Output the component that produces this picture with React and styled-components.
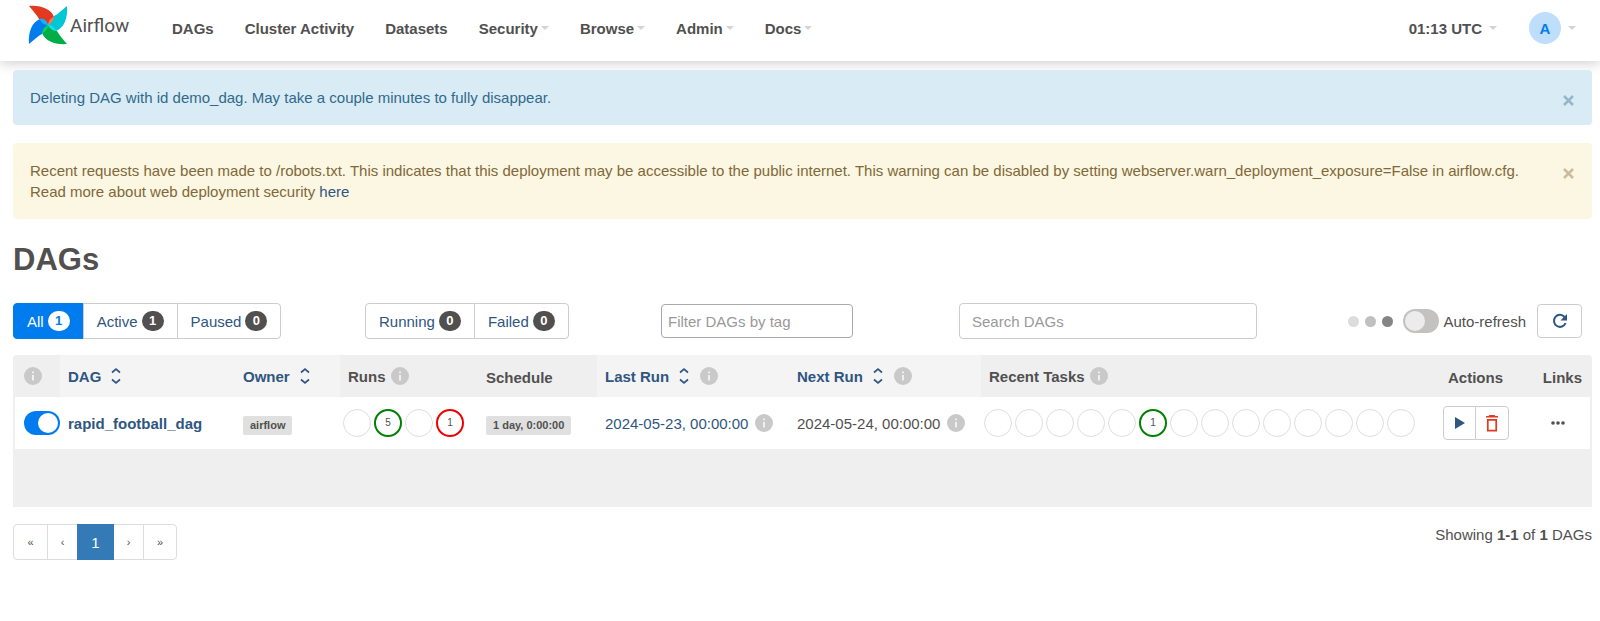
import React from 'react';
import styled, { createGlobalStyle, css } from 'styled-components';

const color = {
  text: '#51504f',
  link: '#2f5680',
  blue: '#017cee',
  border: '#cccccc',
  band: '#efefef',
  bandLight: '#f4f4f4',
};

const GlobalStyle = createGlobalStyle`
  *, *::before, *::after { box-sizing: border-box; }
  body {
    margin: 0;
    background: #fff;
    color: ${color.text};
    font-family: "Liberation Sans", Arial, sans-serif;
    font-size: 15px;
    line-height: 21px;
  }
  button, input { font: inherit; color: inherit; }
  button { cursor: pointer; }
  a { color: ${color.link}; text-decoration: none; }
`;

const NavBar = styled.header`
  display: flex;
  align-items: center;
  height: 61px;
  padding: 0 24px 5px 28px;
  background: #fff;
  box-shadow: 0 2px 12px rgba(0, 0, 0, 0.2);
`;

const Brand = styled.a`
  display: flex;
  align-items: center;
  gap: 2px;
  width: 144px;
  padding-bottom: 6px;
  color: ${color.text};
  font-family: Roboto, sans-serif;
  font-size: 19px;
`;

const NavMenu = styled.nav`
  display: flex;
  flex: 1;
  gap: 31px;
`;

const NavItem = styled.a`
  display: flex;
  align-items: center;
  gap: ${(p) => p.$gap || 3}px;
  color: ${color.text};
  font-weight: bold;
  white-space: nowrap;
`;

const NavEnd = styled.div`
  display: flex;
  align-items: center;
  gap: 32px;
`;

const Caret = styled.span`
  border: 4px solid transparent;
  border-top-color: #d5d3d3;
  border-bottom: 0;
`;

const Avatar = styled.span`
  display: grid;
  place-items: center;
  width: 32px;
  height: 32px;
  border-radius: 50%;
  background: #bfdefb;
  color: ${color.blue};
`;

const Page = styled.main`
  padding: 9px 8px 40px 13px;
`;

const Alert = styled.div`
  display: flex;
  align-items: flex-start;
  justify-content: space-between;
  margin-bottom: 18px;
  padding: 17px;
  border-radius: 4px;
  background: ${(p) => (p.$warning ? '#fcf7e2' : '#d9ecf5')};
  color: ${(p) => (p.$warning ? '#80683a' : '#31698c')};
`;

const AlertClose = styled.button`
  display: flex;
  margin: 8px 1px 0 0;
  padding: 0;
  border: 0;
  background: none;
  opacity: 0.4;
`;

const Title = styled.h1`
  margin: 22px 0 25px;
  font-size: 31px;
  line-height: 37px;
`;

const Toolbar = styled.div`
  display: grid;
  grid-template-columns: 352fr 296fr 298fr 298fr 335fr;
  align-items: center;
  height: 36px;
  margin-bottom: 16px;
`;

const ButtonGroup = styled.div`
  display: flex;
`;

const groupItem = css`
  display: flex;
  align-items: center;
  justify-content: center;
  border: 1px solid ${color.border};
  background: #fff;
  color: ${color.link};
  & + & { margin-left: -1px; }
  &:first-child { border-radius: 4px 0 0 4px; }
  &:last-child { border-radius: 0 4px 4px 0; }
`;

const FilterButton = styled.button`
  ${groupItem}
  gap: 4px;
  height: 36px;
  padding: 0 13px;
  ${(p) => p.$active && css`
    border-color: ${color.blue};
    background: ${color.blue};
    color: #fff;
  `}
`;

const Badge = styled.span`
  min-width: 22px;
  border-radius: 10px;
  background: ${(p) => (p.$active ? '#fff' : color.text)};
  color: ${(p) => (p.$active ? color.blue : '#fff')};
  font-size: 13px;
  font-weight: bold;
  line-height: 20px;
  text-align: center;
`;

const TextField = styled.input`
  width: ${(p) => (p.$compact ? '192px' : '100%')};
  height: ${(p) => (p.$compact ? 34 : 36)}px;
  padding: 0 ${(p) => (p.$compact ? 6 : 12)}px;
  border: 1px solid ${(p) => (p.$compact ? '#aaa' : color.border)};
  border-radius: 4px;
  background: #fff;
  &::placeholder { color: #999; opacity: 1; }
`;

const RefreshArea = styled.div`
  display: flex;
  align-items: center;
  justify-content: flex-end;
  padding-right: 10px;
`;

const Dots = styled.div`
  display: flex;
  gap: 6px;
  margin-right: 10px;
`;

const Dot = styled.span`
  width: 11px;
  height: 11px;
  border-radius: 50%;
  background: ${(p) => p.$tone};
`;

const SwitchLabel = styled.label`
  display: flex;
  align-items: center;
  gap: 4px;
  white-space: nowrap;
`;

const Switch = styled.input`
  appearance: none;
  display: flex;
  align-items: center;
  width: 36px;
  height: 24px;
  margin: 0;
  padding: 0 2px;
  border-radius: 12px;
  background: #c4c2c1;
  &::before {
    content: '';
    width: 20px;
    height: 20px;
    border-radius: 50%;
    background: #edecec;
  }
  &:checked { justify-content: flex-end; background: ${color.blue}; }
  &:checked::before { background: #fff; }
`;

const IconButton = styled.button`
  ${groupItem}
  width: ${(p) => p.$width}px;
  height: 34px;
  padding: 0;
  ${(p) => p.$danger && css`color: #e43921;`}
  &&.single { border-radius: 4px; margin-left: 11px; }
`;

const TableFrame = styled.div`
  padding: 0 2px 58px;
  border-radius: 4px 4px 0 0;
  background: ${color.band};
`;

const Table = styled.table`
  width: 100%;
  table-layout: fixed;
  border-collapse: collapse;
`;

const HeadCell = styled.th`
  height: 42px;
  padding: ${(p) => (p.$plain ? '3px' : '0')} 8px 0 ${(p) => (p.$first ? 9 : 8)}px;
  background: ${(p) => (p.$light ? color.bandLight : 'transparent')};
  color: ${(p) => (p.$light ? color.link : color.text)};
  text-align: ${(p) => p.$align || 'left'};
  white-space: nowrap;
`;

const HeadContent = styled.span`
  display: flex;
  align-items: center;
  gap: ${(p) => p.$gap || 5}px;
`;

const SortLink = styled.a`
  display: flex;
  align-items: center;
  gap: 10px;
`;

const Cell = styled.td`
  height: 52px;
  padding: 0 8px 0 ${(p) => (p.$tight ? 3 : p.$first ? 9 : 8)}px;
  background: #fff;
  white-space: nowrap;
`;

const DagLink = styled.a`
  font-weight: bold;
`;

const Tag = styled.a`
  display: inline-block;
  margin-top: 4px;
  padding: 0 7px;
  border-radius: 2px;
  background: #e0e0e0;
  color: ${color.text};
  font-size: 11px;
  font-weight: bold;
  line-height: 19px;
  vertical-align: middle;
`;

const MoreLink = styled.a`
  display: flex;
  justify-content: center;
`;

const CircleRow = styled.div`
  display: flex;
  gap: 3px;
`;

const Circle = styled.span`
  display: grid;
  place-items: center;
  width: 28px;
  height: 28px;
  border: ${(p) => (p.$tone ? `2px solid ${p.$tone}` : '1px solid #dedede')};
  border-radius: 50%;
  font-size: 10px;
  line-height: 12px;
`;

const RunDate = styled.span`
  display: flex;
  align-items: center;
  gap: 7px;
`;

const Footer = styled.footer`
  display: flex;
  justify-content: space-between;
  align-items: flex-start;
  margin-top: 17px;
`;

const Pager = styled.nav`
  display: flex;
`;

const PageLink = styled.a`
  ${groupItem}
  width: ${(p) => p.$width}px;
  height: 36px;
  border-color: #ddd;
  color: ${color.text};
  font-size: ${(p) => (p.$current ? 15 : 11)}px;
  ${(p) => p.$current && css`
    border-color: #337ab7;
    background: #337ab7;
    color: #fff;
    z-index: 1;
  `}
`;

const petals = [
  [0, '#e43921', '#ff7557'],
  [90, '#00c7d4', '#11e1ee'],
  [180, '#00ad46', '#04d659'],
  [270, '#017cee', '#0cb6ff'],
];

const Pinwheel = () => (
  <svg width="40" height="40" viewBox="0 0 40 40" aria-hidden="true">
    {petals.map(([angle, fill, fold]) => (
      <g key={angle} transform={`rotate(${angle} 20 20)`}>
        <path fill={fill} d="M1 1C13 0 23 4 26 12L20 20C18 16 15 14 11 14C9 10 5 6 1 1Z" />
        <path fill={fold} d="M20 20C20 17 22 13 26 12C27 16 24 19 20 20Z" />
      </g>
    ))}
  </svg>
);

const Cross = () => (
  <svg width="11" height="11" viewBox="0 0 11 11" aria-hidden="true">
    <path d="M1 1L10 10M10 1L1 10" stroke="currentColor" strokeWidth="2.500" />
  </svg>
);

const SortIcon = () => (
  <svg width="10" height="16" viewBox="0 0 10 16" fill="none" stroke="currentColor" strokeWidth="1.700" aria-hidden="true">
    <path d="M1 4.500L5 1.200L9 4.500M1 11.500L5 14.800L9 11.500" />
  </svg>
);

const InfoIcon = () => (
  <svg width="18" height="18" viewBox="0 0 18 18" aria-hidden="true">
    <circle cx="9" cy="9" r="9" fill="#c9c9c9" />
    <path d="M8.100 4.500h1.800v1.800H8.100zM8.100 8h1.800v5.500H8.100z" fill="#f4f4f4" />
  </svg>
);

const RefreshIcon = () => (
  <svg width="16" height="16" viewBox="0 0 16 16" aria-hidden="true">
    <path fill="none" stroke="currentColor" strokeWidth="2" d="M12.600 4A6 6 0 1 0 13.600 10" />
    <path fill="currentColor" d="M15 1v6.500H8.500z" />
  </svg>
);

const PlayIcon = () => (
  <svg width="10" height="12" viewBox="0 0 10 12" aria-hidden="true">
    <path d="M0 0L10 6L0 12Z" fill="currentColor" />
  </svg>
);

const TrashIcon = () => (
  <svg width="14" height="17" viewBox="0 0 14 17" aria-hidden="true">
    <path fill="none" stroke="currentColor" strokeWidth="1.700" d="M2.800 4.800h8.400v10.800H2.800z" />
    <path fill="currentColor" d="M4.500 0h5l.8 1H13v1.600H1V1h2.700z" />
  </svg>
);

const MoreIcon = () => (
  <svg width="14" height="4" viewBox="0 0 14 4" fill={color.text} aria-hidden="true">
    <circle cx="2" cy="2" r="1.800" /><circle cx="7" cy="2" r="1.800" /><circle cx="12" cy="2" r="1.800" />
  </svg>
);

const navLinks = [
  ['DAGs'], ['Cluster Activity'], ['Datasets'],
  ['Security', true], ['Browse', true], ['Admin', true], ['Docs', true],
];
const columnWidths = [45, 175, 105, 138, 119, 192, 192, 459, 90, 60];
const runCounts = [{}, { n: 5, tone: 'green' }, {}, { n: 1, tone: '#f00000' }];
const taskCounts = Array.from({ length: 14 }, (_, i) => (i === 5 ? { n: 1, tone: 'green' } : {}));

const Filter = ({ label, count, active }) => (
  <FilterButton type="button" $active={active}>
    {label}<Badge $active={active}>{count}</Badge>
  </FilterButton>
);

const SortHead = ({ label, info }) => (
  <HeadCell $light>
    <HeadContent $gap={11}>
      <SortLink href="#sort">{label}<SortIcon /></SortLink>
      {info && <InfoIcon />}
    </HeadContent>
  </HeadCell>
);

const Counts = ({ items }) => (
  <CircleRow>
    {items.map((c, i) => <Circle key={i} $tone={c.tone}>{c.n}</Circle>)}
  </CircleRow>
);

export default function App() {
  return (
    <>
      <GlobalStyle />
      <NavBar>
        <Brand href="#home"><Pinwheel />Airflow</Brand>
        <NavMenu>
          {navLinks.map(([label, menu]) => (
            <NavItem key={label} href="#nav">{label}{menu && <Caret />}</NavItem>
          ))}
        </NavMenu>
        <NavEnd>
          <NavItem href="#time" $gap={7}>01:13 UTC<Caret /></NavItem>
          <NavItem href="#user" $gap={7}><Avatar>A</Avatar><Caret /></NavItem>
        </NavEnd>
      </NavBar>
      <Page>
        <Alert role="status">
          <span>Deleting DAG with id demo_dag. May take a couple minutes to fully disappear.</span>
          <AlertClose type="button" aria-label="Close"><Cross /></AlertClose>
        </Alert>
        <Alert role="alert" $warning>
          <span>
            Recent requests have been made to /robots.txt. This indicates that this deployment may be accessible to the public internet. This warning can be disabled by setting webserver.warn_deployment_exposure=False in airflow.cfg.
            <br />
            Read more about web deployment security <a href="#security">here</a>
          </span>
          <AlertClose type="button" aria-label="Close"><Cross /></AlertClose>
        </Alert>
        <Title>DAGs</Title>
        <Toolbar>
          <ButtonGroup>
            <Filter label="All" count={1} active />
            <Filter label="Active" count={1} />
            <Filter label="Paused" count={0} />
          </ButtonGroup>
          <ButtonGroup>
            <Filter label="Running" count={0} />
            <Filter label="Failed" count={0} />
          </ButtonGroup>
          <TextField $compact aria-label="Filter DAGs by tag" placeholder="Filter DAGs by tag" />
          <TextField aria-label="Search DAGs" placeholder="Search DAGs" />
          <RefreshArea>
            <Dots><Dot $tone="#dcdcdc" /><Dot $tone="#c0c0c0" /><Dot $tone="#858585" /></Dots>
            <SwitchLabel><Switch type="checkbox" />Auto-refresh</SwitchLabel>
            <IconButton type="button" className="single" $width={45} aria-label="Refresh"><RefreshIcon /></IconButton>
          </RefreshArea>
        </Toolbar>
        <TableFrame>
          <Table>
            <colgroup>
              {columnWidths.map((w, i) => <col key={i} width={w} />)}
            </colgroup>
            <thead>
              <tr>
                <HeadCell $first><HeadContent><InfoIcon /></HeadContent></HeadCell>
                <SortHead label="DAG" />
                <SortHead label="Owner" />
                <HeadCell><HeadContent>Runs<InfoIcon /></HeadContent></HeadCell>
                <HeadCell $plain>Schedule</HeadCell>
                <SortHead label="Last Run" info />
                <SortHead label="Next Run" info />
                <HeadCell><HeadContent>Recent Tasks<InfoIcon /></HeadContent></HeadCell>
                <HeadCell $plain>Actions</HeadCell>
                <HeadCell $plain $align="right">Links</HeadCell>
              </tr>
            </thead>
            <tbody>
              <tr>
                <Cell $first><Switch type="checkbox" defaultChecked aria-label="Pause rapid_football_dag" /></Cell>
                <Cell><DagLink href="#dag">rapid_football_dag</DagLink></Cell>
                <Cell><Tag href="#owner">airflow</Tag></Cell>
                <Cell $tight><Counts items={runCounts} /></Cell>
                <Cell><Tag href="#schedule">1 day, 0:00:00</Tag></Cell>
                <Cell><RunDate><a href="#run">2024-05-23, 00:00:00</a><InfoIcon /></RunDate></Cell>
                <Cell><RunDate>2024-05-24, 00:00:00<InfoIcon /></RunDate></Cell>
                <Cell $tight><Counts items={taskCounts} /></Cell>
                <Cell $tight>
                  <ButtonGroup>
                    <IconButton type="button" $width={33} aria-label="Trigger DAG"><PlayIcon /></IconButton>
                    <IconButton type="button" $width={34} $danger aria-label="Delete DAG"><TrashIcon /></IconButton>
                  </ButtonGroup>
                </Cell>
                <Cell $tight><MoreLink href="#links" aria-label="Links"><MoreIcon /></MoreLink></Cell>
              </tr>
            </tbody>
          </Table>
        </TableFrame>
        <Footer>
          <Pager aria-label="Pages">
            <PageLink href="#first" $width={35}>«</PageLink>
            <PageLink href="#prev" $width={31}>‹</PageLink>
            <PageLink href="#1" $width={37} $current>1</PageLink>
            <PageLink href="#next" $width={31}>›</PageLink>
            <PageLink href="#last" $width={34}>»</PageLink>
          </Pager>
          <span>Showing <b>1-1</b> of <b>1</b> DAGs</span>
        </Footer>
      </Page>
    </>
  );
}
